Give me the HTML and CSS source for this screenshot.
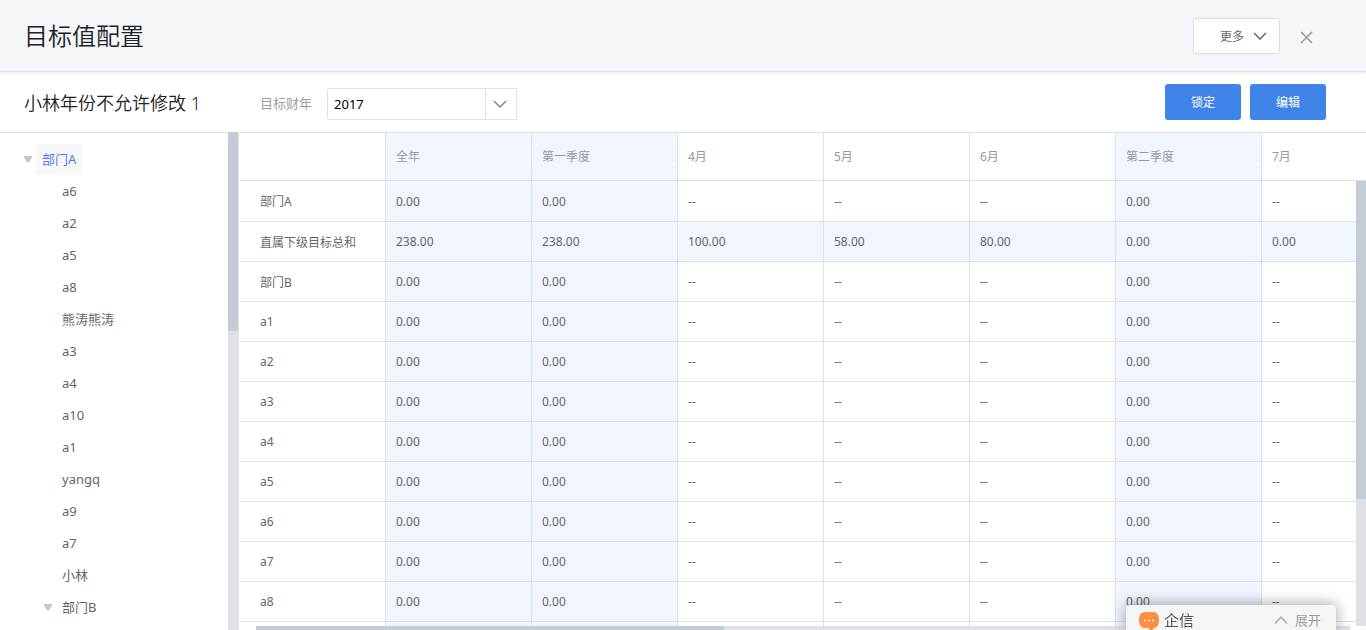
FILE: index.html
```html
<!DOCTYPE html>
<html lang="zh-CN">
<head>
<meta charset="utf-8">
<meta name="viewport" content="width=device-width, initial-scale=1">
<title>目标值配置</title>
<link rel="stylesheet" href="styles.css">
</head>
<body>
<div class="page">
  <header class="header">
    <h1 class="title">目标值配置</h1>
    <button class="more" type="button">更多
      <svg class="chevron" width="14" height="8" viewBox="0 0 14 8"><path d="M1 1l6 6 6-6"/></svg>
    </button>
    <button class="close" type="button" aria-label="关闭">
      <svg width="14" height="14" viewBox="0 0 14 14"><path d="M1 1l11 11M12 1l-11 11"/></svg>
    </button>
  </header>

  <div class="toolbar">
    <h2 class="subject">小林年份不允许修改 1</h2>
    <label class="year-label" for="year">目标财年</label>
    <div class="year">
      <select id="year" class="year-select"><option>2017</option></select>
      <svg class="year-arrow" width="14" height="8" viewBox="0 0 14 8"><path d="M1 1l6 6 6-6"/></svg>
    </div>
    <div class="actions">
      <button class="primary" type="button">锁定</button>
      <button class="primary" type="button">编辑</button>
    </div>
  </div>

  <div class="content">
    <nav class="tree">
      <ul class="tree-list">
        <li class="node open"><a class="node-link active" href="#">部门A</a></li>
        <li class="node child"><a class="node-link" href="#">a6</a></li>
        <li class="node child"><a class="node-link" href="#">a2</a></li>
        <li class="node child"><a class="node-link" href="#">a5</a></li>
        <li class="node child"><a class="node-link" href="#">a8</a></li>
        <li class="node child"><a class="node-link" href="#">熊涛熊涛</a></li>
        <li class="node child"><a class="node-link" href="#">a3</a></li>
        <li class="node child"><a class="node-link" href="#">a4</a></li>
        <li class="node child"><a class="node-link" href="#">a10</a></li>
        <li class="node child"><a class="node-link" href="#">a1</a></li>
        <li class="node child"><a class="node-link" href="#">yangq</a></li>
        <li class="node child"><a class="node-link" href="#">a9</a></li>
        <li class="node child"><a class="node-link" href="#">a7</a></li>
        <li class="node child"><a class="node-link" href="#">小林</a></li>
        <li class="node child open"><a class="node-link" href="#">部门B</a></li>
      </ul>
    </nav>
    <div class="bar bar-tree"><div class="thumb"></div></div>

    <main class="grid">
      <div class="grid-view">
        <table class="table">
          <thead>
            <tr><th></th><th class="sum">全年</th><th class="sum">第一季度</th><th>4月</th><th>5月</th><th>6月</th><th class="sum">第二季度</th><th>7月</th></tr>
          </thead>
          <tbody>
            <tr><td>部门A</td><td class="sum">0.00</td><td class="sum">0.00</td><td>--</td><td>--</td><td>--</td><td class="sum">0.00</td><td>--</td></tr>
            <tr class="total"><td>直属下级目标总和</td><td class="sum">238.00</td><td class="sum">238.00</td><td>100.00</td><td>58.00</td><td>80.00</td><td class="sum">0.00</td><td>0.00</td></tr>
            <tr><td>部门B</td><td class="sum">0.00</td><td class="sum">0.00</td><td>--</td><td>--</td><td>--</td><td class="sum">0.00</td><td>--</td></tr>
            <tr><td>a1</td><td class="sum">0.00</td><td class="sum">0.00</td><td>--</td><td>--</td><td>--</td><td class="sum">0.00</td><td>--</td></tr>
            <tr><td>a2</td><td class="sum">0.00</td><td class="sum">0.00</td><td>--</td><td>--</td><td>--</td><td class="sum">0.00</td><td>--</td></tr>
            <tr><td>a3</td><td class="sum">0.00</td><td class="sum">0.00</td><td>--</td><td>--</td><td>--</td><td class="sum">0.00</td><td>--</td></tr>
            <tr><td>a4</td><td class="sum">0.00</td><td class="sum">0.00</td><td>--</td><td>--</td><td>--</td><td class="sum">0.00</td><td>--</td></tr>
            <tr><td>a5</td><td class="sum">0.00</td><td class="sum">0.00</td><td>--</td><td>--</td><td>--</td><td class="sum">0.00</td><td>--</td></tr>
            <tr><td>a6</td><td class="sum">0.00</td><td class="sum">0.00</td><td>--</td><td>--</td><td>--</td><td class="sum">0.00</td><td>--</td></tr>
            <tr><td>a7</td><td class="sum">0.00</td><td class="sum">0.00</td><td>--</td><td>--</td><td>--</td><td class="sum">0.00</td><td>--</td></tr>
            <tr><td>a8</td><td class="sum">0.00</td><td class="sum">0.00</td><td>--</td><td>--</td><td>--</td><td class="sum">0.00</td><td>--</td></tr>
            <tr><td></td><td class="sum"></td><td class="sum"></td><td></td><td></td><td></td><td class="sum"></td><td></td></tr>
          </tbody>
        </table>
        <div class="bar bar-right"><div class="thumb"></div></div>
      </div>
      <div class="bar bar-bottom"><div class="thumb"></div></div>
    </main>
  </div>
</div>

<button class="chat" type="button">
  <svg width="20" height="19" viewBox="0 0 20 19"><path fill="#ff8f3e" d="M6 0h8c4 0 6 3 6 8s-2 8-5 8l-3 3-3-3H6c-4 0-6-3-6-8s2-8 6-8z"/><g fill="#fff"><circle cx="6" cy="8.500" r="1"/><circle cx="10" cy="8.500" r="1"/><circle cx="14" cy="8.500" r="1"/></g></svg>
  <span class="chat-name">企信</span>
  <svg class="chat-up" width="14" height="8" viewBox="0 0 14 8"><path d="M1 7.500l6-6.500 6 6.500"/></svg>
  <span class="chat-open">展开</span>
</button>
</body>
</html>
```
FILE: styles.css
```css
* { box-sizing: border-box; }

body,
button,
select {
  font-family: "Noto Sans", "Noto Sans CJK SC", sans-serif;
}

body {
  margin: 0;
  color: #666;
  font-size: 12px;
  background: #fff;
  overflow: hidden;
}

.page {
  display: flex;
  flex-direction: column;
  height: 100vh;
}

.header {
  display: flex;
  align-items: center;
  flex: none;
  height: 72px;
  padding: 0 53px 0 24px;
  background: #f4f6fa;
  border-bottom: 1px solid #e1e2e6;
  box-shadow: 0 1px 3px rgba(0, 0, 0, 0.1);
}

.title {
  margin: 0;
  padding-bottom: 2px;
  color: #222;
  font-size: 24px;
  font-weight: 350;
}

.more {
  display: flex;
  align-items: center;
  gap: 9px;
  width: 87px;
  height: 36px;
  margin-left: auto;
  padding: 0 0 0 26px;
  color: #666;
  font-size: 12px;
  background: #fff;
  border: 1px solid #ddd;
  border-radius: 3px;
}

.chevron path,
.close path,
.year-arrow path,
.chat-up path {
  fill: none;
  stroke: #666;
  stroke-width: 1.5;
}

.close {
  display: flex;
  width: 14px;
  margin-left: 20px;
  margin-right: -1px;
  padding: 4px 0 0;
  background: none;
  border: 0;
}

.close path { stroke: #999; }

.toolbar {
  display: flex;
  align-items: center;
  flex: none;
  height: 60px;
  padding: 0 40px 0 24px;
}

.subject {
  width: 236px;
  margin: 0;
  color: #222;
  font-size: 18px;
  font-weight: 350;
}

.year-label {
  margin-right: 15px;
  color: #999ea8;
  font-size: 13px;
}

.year {
  display: flex;
  align-items: center;
  position: relative;
  margin-top: 4px;
}

.year-select {
  width: 190px;
  height: 32px;
  padding: 0 6px;
  color: #000;
  font-size: 13px;
  background: linear-gradient(#dde1e6, #dde1e6) 157px 0 / 1px 100% no-repeat #fff;
  border: 1px solid #dde1e6;
  border-radius: 2px;
  appearance: none;
}

.year-arrow {
  position: absolute;
  right: 10px;
  pointer-events: none;
}

.year-arrow path { stroke: #7f8794; }

.actions {
  display: flex;
  gap: 9px;
  margin-left: auto;
}

.primary {
  width: 76px;
  height: 36px;
  padding: 0;
  color: #fff;
  font-size: 12px;
  font-weight: 400;
  background: #3f84e9;
  border: 0;
  border-radius: 3px;
}

.content {
  display: flex;
  flex: 1;
  min-height: 0;
}

.tree {
  flex: none;
  width: 228px;
  border-top: 1px solid #dde1e7;
  overflow: hidden;
}

.tree-list {
  margin: 0;
  padding: 10px 0 0 24px;
  list-style: none;
}

.node {
  display: flex;
  align-items: center;
  height: 32px;
  padding-left: 12px;
}

.node.open { padding-left: 0; }
.node.child { padding-left: 32px; }
.node.child.open { padding-left: 20px; }

.node.open::before {
  content: "";
  width: 8px;
  height: 7px;
  margin-right: 4px;
  background: #c8c8c8;
  clip-path: polygon(0 0, 100% 0, 100% 30%, 60% 100%, 40% 100%, 0 30%);
}

.node-link {
  padding: 0 6px;
  color: #666;
  font-size: 13px;
  line-height: 31px;
  text-decoration: none;
}

.node-link.active {
  color: #4a7dfb;
  background: #f7f7f7;
}

.bar {
  flex: none;
  background: #dee2e6;
}

.thumb { background: #c4ccd5; }

.bar-tree {
  width: 11px;
  margin-right: 1px;
  border-right: 1px solid #dde1e7;
}

.bar-tree .thumb { height: 40%; }

.grid {
  display: flex;
  flex: 1;
  flex-direction: column;
  min-width: 0;
  border-top: 1px solid #dde1e7;
}

.grid-view {
  position: relative;
  flex: 1;
  min-height: 0;
  overflow: hidden;
}

.table {
  width: 100%;
  min-width: 1168px;
  table-layout: fixed;
  border-spacing: 0;
}

.table th,
.table td {
  height: 40px;
  padding: 0 10px;
  font-weight: 400;
  text-align: left;
  border-right: 1px solid #dde1e7;
  border-bottom: 1px solid #dde1e7;
}

.table th {
  position: relative;
  height: 48px;
  padding-bottom: 2px;
  color: #999;
}

.table tbody tr:first-child td { height: 41px; }
.table td:first-child { padding-left: 20px; }

.table .sum,
.total td { background: #f0f5fe; }

.total td:first-child { background: #fff; }

.table th.sum::after {
  content: "";
  position: absolute;
  top: 18px;
  right: 2px;
  width: 2px;
  height: 9px;
  border: solid #fff;
  border-width: 2px 0;
}

.bar-right {
  position: absolute;
  top: 48px;
  right: 0;
  bottom: 0;
  width: 10px;
}

.bar-right .thumb { height: 318px; }

.bar-bottom {
  height: 4px;
  margin: 0 16px;
}

.bar-bottom .thumb {
  width: 468px;
  height: 4px;
}

.chat {
  display: flex;
  align-items: flex-start;
  position: fixed;
  right: 30px;
  bottom: 0;
  width: 210px;
  height: 25px;
  padding: 5px 15px 0 13px;
  background: #f3f5f7;
  border: 0;
  border-radius: 4px 4px 0 0;
  box-shadow: 0 0 16px rgba(0, 0, 0, 0.4);
  overflow: hidden;
}

.chat svg {
  flex: none;
  margin-top: 2px;
}

.chat-name {
  margin-left: 5px;
  color: #555;
  font-size: 15px;
  line-height: 20px;
}

.chat .chat-up {
  margin-top: 6px;
  margin-left: auto;
}

.chat-up path { stroke: #aaa; }

.chat-open {
  margin-left: 7px;
  color: #999;
  font-size: 13px;
  line-height: 20px;
}
```
